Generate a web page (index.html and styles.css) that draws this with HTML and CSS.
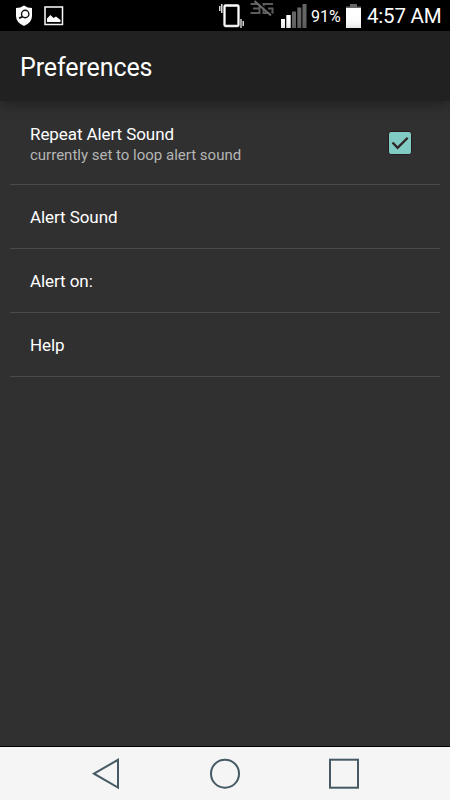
FILE: index.html
```html
<!DOCTYPE html>
<html lang="en">
<head>
    <meta charset="UTF-8">
    <meta name="viewport" content="width=device-width, initial-scale=1.0">
    <title>Preferences</title>
    <link rel="stylesheet" href="styles.css">
</head>

<body>
    <div class="screen">
        <div class="status-bar">
            <svg class="icon-shield" width="18" height="22" viewBox="0 0 18 22">
                <path d="M9 0.5 Q12.5 3 17 3 V11 Q17 17.5 9 21 Q1 17.5 1 11 V3 Q5.500 3 9 0.500Z" fill="#fff"/>
                <circle cx="10.200" cy="9" r="3.700" fill="none" stroke="#111" stroke-width="1.400"/>
                <path d="M7.600 11.600 L4 13.200" stroke="#111" stroke-width="1.800"/>
            </svg>
            <svg class="icon-picture" width="20" height="20" viewBox="0 0 20 20">
                <rect x="1" y="1" width="17.500" height="17.500" fill="none" stroke="#fff" stroke-width="1.500"/>
                <path d="M3 16 V12.500 L6.500 9 L9.500 12 L12 10.500 L16.500 14 V16Z" fill="#fff"/>
            </svg>
            <svg class="icon-vibrate" width="26" height="26" viewBox="0 0 26 26">
                <rect x="5.500" y="3.500" width="14" height="20.500" rx="1" fill="none" stroke="#fff" stroke-width="2.300"/>
                <path d="M2.800 2 V11 M0.800 4 V9 M22 17 V26 M24.200 19 V24" stroke="#fff" stroke-width="1.300"/>
            </svg>
            <svg class="icon-3g" width="24" height="18" viewBox="0 0 24 18">
                <path d="M0.500 4 H9.500 V13 H0.500 M3 8.500 H9.500 M23 4 H13.500 V13 H22.500 V8.500 H18" fill="none" stroke="#5c5c5c" stroke-width="2"/>
                <path d="M6 0.500 L22.500 14.500" stroke="#000" stroke-width="1.500"/>
                <path d="M4.500 1 L21 15.500" stroke="#6a6a6a" stroke-width="2"/>
            </svg>
            <svg class="icon-signal" width="26" height="24" viewBox="0 0 26 24">
                <path d="M0 15 H4 V24 H0Z M5.300 11 H9.700 V24 H5.300Z" fill="#fff"/>
                <path d="M11 7.500 H15 V24 H11Z M16.300 3.500 H20.300 V24 H16.300Z M21.500 0 H25.500 V24 H21.500Z" fill="#666"/>
            </svg>
            <span class="percent">91%</span>
            <svg class="icon-battery" width="15" height="24" viewBox="0 0 15 24">
                <rect x="4" y="0" width="7" height="3" fill="#666"/>
                <rect x="0" y="2.500" width="15" height="1.500" fill="#666"/>
                <rect x="0" y="4" width="15" height="20" fill="#fff"/>
            </svg>
            <span class="time">4:57 AM</span>
        </div>

        <div class="header">
            <h1>Preferences</h1>
        </div>

        <div class="list">
            <div class="item item-check">
                <div>
                    <div class="item-title">Repeat Alert Sound</div>
                    <div class="item-summary">currently set to loop alert sound</div>
                </div>
                <svg class="checkbox" width="24" height="24" viewBox="0 0 24 24">
                    <rect x="0.500" y="0.500" width="23" height="23" rx="2.500" fill="#80cbc4" stroke="#261c1d"/>
                    <path d="M4.500 11.500 L9.600 16.800 L19.700 6.700" fill="none" stroke="#302526" stroke-width="2.300"/>
                </svg>
            </div>
            <div class="item">
                <div class="item-title">Alert Sound</div>
            </div>
            <div class="item">
                <div class="item-title">Alert on:</div>
            </div>
            <div class="item">
                <div class="item-title">Help</div>
            </div>
        </div>

        <div class="nav-bar">
            <svg width="32" height="32" viewBox="0 0 32 32">
                <path d="M4 15.700 L28 1.800 V29.600Z" fill="none" stroke="#455a64" stroke-width="2"/>
            </svg>
            <svg width="32" height="32" viewBox="0 0 32 32">
                <circle cx="16" cy="15.700" r="14" fill="none" stroke="#455a64" stroke-width="2"/>
            </svg>
            <svg width="32" height="32" viewBox="0 0 32 32">
                <rect x="2" y="1.700" width="28" height="28" fill="none" stroke="#455a64" stroke-width="2"/>
            </svg>
        </div>
    </div>
</body>
</html>
```
FILE: styles.css
```css
* {
    margin: 0;
    padding: 0;
    box-sizing: border-box;
}

body {
    background: #303030;
    font-family: Roboto, sans-serif;
    color: #fff;
}

svg {
    display: block;
    flex-shrink: 0;
}

.screen {
    display: flex;
    flex-direction: column;
    width: 450px;
    height: 800px;
    overflow: hidden;
}

.status-bar {
    display: flex;
    align-items: flex-start;
    height: 31px;
    background: #000;
    white-space: nowrap;
    flex-shrink: 0;
}

.icon-shield {
    margin: 5px 0 0 15px;
}

.icon-picture {
    margin: 6px 0 0 11px;
}

.icon-vibrate {
    margin: 2px 0 0 155px;
}

.icon-3g {
    margin: 0 0 0 5px;
}

.icon-signal {
    margin: 4px 0 0 7px;
}

.percent {
    width: 35px;
    margin-left: 4px;
    font-size: 16px;
    line-height: 33px;
}

.icon-battery {
    margin-top: 4px;
}

.time {
    margin-left: 6px;
    font-size: 20.5px;
    line-height: 33px;
    letter-spacing: -0.2px;
}

.header {
    display: flex;
    align-items: center;
    height: 70px;
    padding: 3px 20px 0;
    background: #212121;
    box-shadow: 0 2px 14px rgba(0, 0, 0, 0.4);
    flex-shrink: 0;
}

.header h1 {
    font-size: 25px;
    font-weight: 400;
    letter-spacing: -0.1px;
}

.list {
    flex: 1;
    padding: 0 10px;
}

.item {
    display: flex;
    align-items: center;
    height: 64px;
    padding: 0 20px;
    border-bottom: 1px solid #4a4a4a;
}

.item-check {
    justify-content: space-between;
    height: 84px;
    padding: 4px 28px 0 20px;
}

.item-title {
    font-size: 17px;
    line-height: 22px;
    letter-spacing: -0.08px;
}

.item-summary {
    font-size: 15px;
    line-height: 21px;
    color: #b5b5b5;
}

.checkbox {
    margin-top: -4px;
}

.nav-bar {
    display: flex;
    justify-content: center;
    gap: 87px;
    height: 54px;
    padding-top: 11px;
    background: #f5f5f5;
    border-top: 1px solid #000;
    flex-shrink: 0;
}
```
